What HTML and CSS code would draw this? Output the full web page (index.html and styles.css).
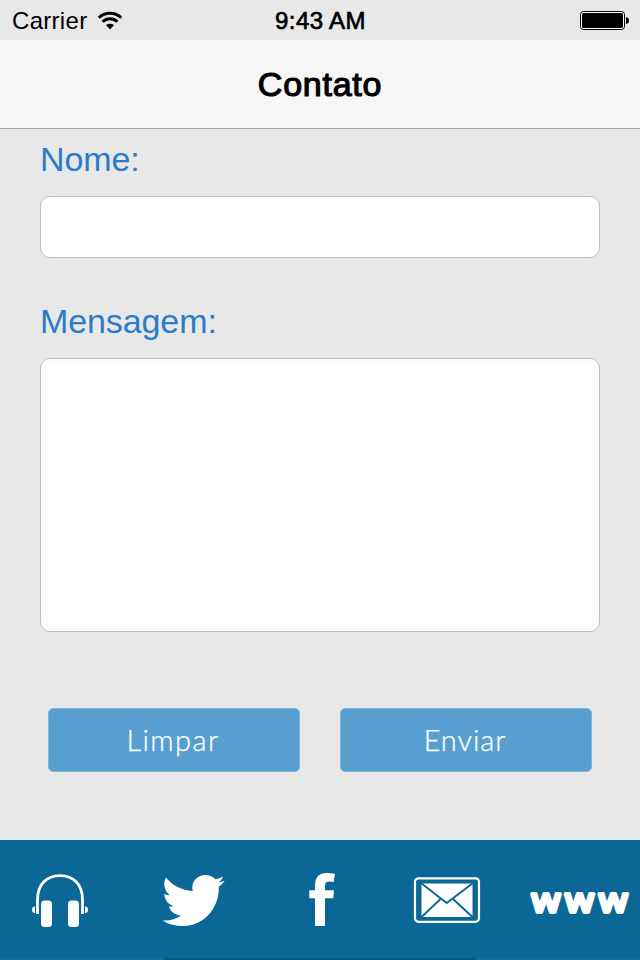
FILE: index.html
```html
<!DOCTYPE html>
<html lang="pt-BR">
<head>
<meta charset="utf-8">
<title>Contato</title>
<link rel="stylesheet" href="styles.css">
</head>
<body>
<div class="app">
  <div class="status">
    <div class="carrier"><span>Carrier</span>
      <svg class="wifi" width="26" height="20" viewBox="0 0 26 20"><g fill="none" stroke="#000" stroke-width="3"><path d="M1.8 6.8A16 16 0 0 1 24.2 6.8"/><path d="M5.6 10.8A10.5 10.5 0 0 1 20.4 10.8"/></g><path d="M9 14.1Q13 11.2 17 14.1L13 18.5Z"/></svg>
    </div>
    <div class="time">9:43 AM</div>
    <svg class="battery" width="49" height="19" viewBox="0 0 49 19"><rect x=".5" y=".5" width="44" height="18" rx="3" fill="#fff" stroke="#000"/><rect x="2" y="2" width="41" height="15" rx="1.6"/><path d="M46 6q3 .5 3 3.5t-3 3.5z"/></svg>
  </div>
  <header class="navbar"><h1>Contato</h1></header>
  <main class="form">
    <label class="label" for="nome">Nome:</label>
    <input class="field" id="nome" type="text">
    <label class="label label-message" for="mensagem">Mensagem:</label>
    <textarea class="message" id="mensagem"></textarea>
    <div class="actions">
      <button class="button clear" type="button"><span>Limpar</span></button>
      <button class="button send" type="button"><span>Enviar</span></button>
    </div>
  </main>
  <nav class="tabs">
    <a class="tab"><svg width="128" height="118" viewBox="0 840 128 118"><path d="M37.500 914V900C37.500 884 47 875.700 60 875.700S82.500 884 82.500 900V914" fill="none" stroke="#fff" stroke-width="2.800"/><g fill="#fff"><rect x="41" y="900.500" width="11" height="26.500" rx="3.500"/><rect x="68" y="900.500" width="11" height="26.500" rx="3.500"/><path d="M35 906.500V913Q32 913 32 909.800T35 906.500ZM85 906.500V913Q88 913 88 909.800T85 906.500Z"/></g></svg></a>
    <a class="tab"><svg width="128" height="118" viewBox="128 840 128 118"><path fill="#fff" d="M166 877.500C172.500 885.500 182 890.500 192.700 891C190.500 881 198 875 205.500 875C209.500 875 213 876.700 215.500 879.300Q219.500 878.500 223.200 876.400Q222 880 218.300 882.500Q221.700 882.100 224.700 880.800Q222.500 884 218.800 886.700C219.500 907 205 926 182.500 926C175.500 926 168.500 924.200 162.500 920.500C169.500 921 176 919.300 180.800 915.500C175 915 170.500 911.500 168.800 906.500H174.300C168.200 904.700 164.500 899.500 164.300 893.700Q167 895.200 170 895.300C164.200 890.700 162.700 883.500 166 877.500Z"/></svg></a>
    <a class="tab"><svg width="128" height="118" viewBox="256 840 128 118"><path fill="#fff" d="M315 926V898.300H309.300V890.200H315V885.500C315 877.500 319 873 326.500 873Q331 873 335 873.800L333.700 882Q331 881.400 329.200 881.400Q325 881.400 325 885.500V890.200H334L333.300 898.300H325V926Z"/></svg></a>
    <a class="tab"><svg width="128" height="118" viewBox="384 840 128 118"><rect x="415" y="878.300" width="64" height="43.500" rx="3.500" fill="none" stroke="#fff" stroke-width="2.200"/><path fill="#fff" d="M421.500 883.500H472.500V917H421.500Z"/><path d="M421 883L446.700 903L473 883M421 917.500L440.500 899M473 917.500L453 899" fill="none" stroke="#0b6798" stroke-width="1.900"/></svg></a>
    <a class="tab"><svg width="128" height="118" viewBox="512 840 128 118"><text class="www" transform="translate(531.700 911.700) scale(1.110 1)">www</text></svg></a>
  </nav>
  <div class="strip"></div>
</div>
</body>
</html>
```
FILE: styles.css
```css
* { box-sizing: border-box; }
body { margin: 0; font-family: "Liberation Sans", Arial, sans-serif; background: #e8e8e8; }
.app { width: 640px; height: 960px; display: flex; flex-direction: column; overflow: hidden; }
.status { height: 40px; display: grid; grid-template-columns: 1fr auto 1fr; align-items: center; padding: 1px 11px 0 12px; font-size: 24px; line-height: 40px; color: #000; }
.carrier { display: flex; align-items: center; gap: 10px; letter-spacing: .3px; }
.wifi { margin-top: -1px; }
.time { font-size: 24px; letter-spacing: .4px; -webkit-text-stroke: .7px #000; }
.battery { justify-self: end; margin-bottom: 2px; }
.navbar { height: 89px; background: #f6f6f6; border-bottom: 1px solid #a3a3a3; display: flex; justify-content: center; align-items: center; }
.navbar h1 { margin: 0; font-size: 34px; line-height: 40px; font-weight: 400; letter-spacing: .75px; -webkit-text-stroke: 1.2px #000; }
.form { height: 711px; padding: 10px 40px 0; display: flex; flex-direction: column; }
.label { color: #2b7bcb; font-size: 34px; line-height: 40px; letter-spacing: -.1px; height: 40px; }
.field, .message { display: block; width: 560px; border: 1px solid #bebebe; border-radius: 10px; background: #fff; margin: 0; padding: 8px; font: inherit; font-size: 28px; outline: none; }
.field { height: 62px; margin-top: 17px; }
.label-message { margin-top: 43px; }
.message { height: 274px; margin-top: 17px; resize: none; box-shadow: inset 0 0 0 7px #fbfbfb; }
.actions { display: flex; justify-content: space-between; padding: 0 8px; margin-top: 76px; }
.button { width: 252px; height: 64px; border: 1px solid #83b6da; border-radius: 5px; background: #589fd1; color: #fff; font: 300 29px/62px Lato, sans-serif; padding: 0; letter-spacing: 1.4px; -webkit-text-stroke: .25px #fff; }
.clear { padding-right: 2px; }
.send { letter-spacing: .9px; padding-right: 2px; }
.tabs { height: 118px; background: #0b6796; display: grid; grid-template-columns: repeat(5, 128px); }
.tab { display: flex; }
.www { font: 400 33px "Open Sans", sans-serif; letter-spacing: 4.7px; fill: #fff; stroke: #fff; stroke-width: 3.8px; stroke-linejoin: round; }
.strip { height: 2px; background: linear-gradient(90deg, #0a70a8 0 164px, #085783 164px 476px, #0a70a8 476px); }
```
